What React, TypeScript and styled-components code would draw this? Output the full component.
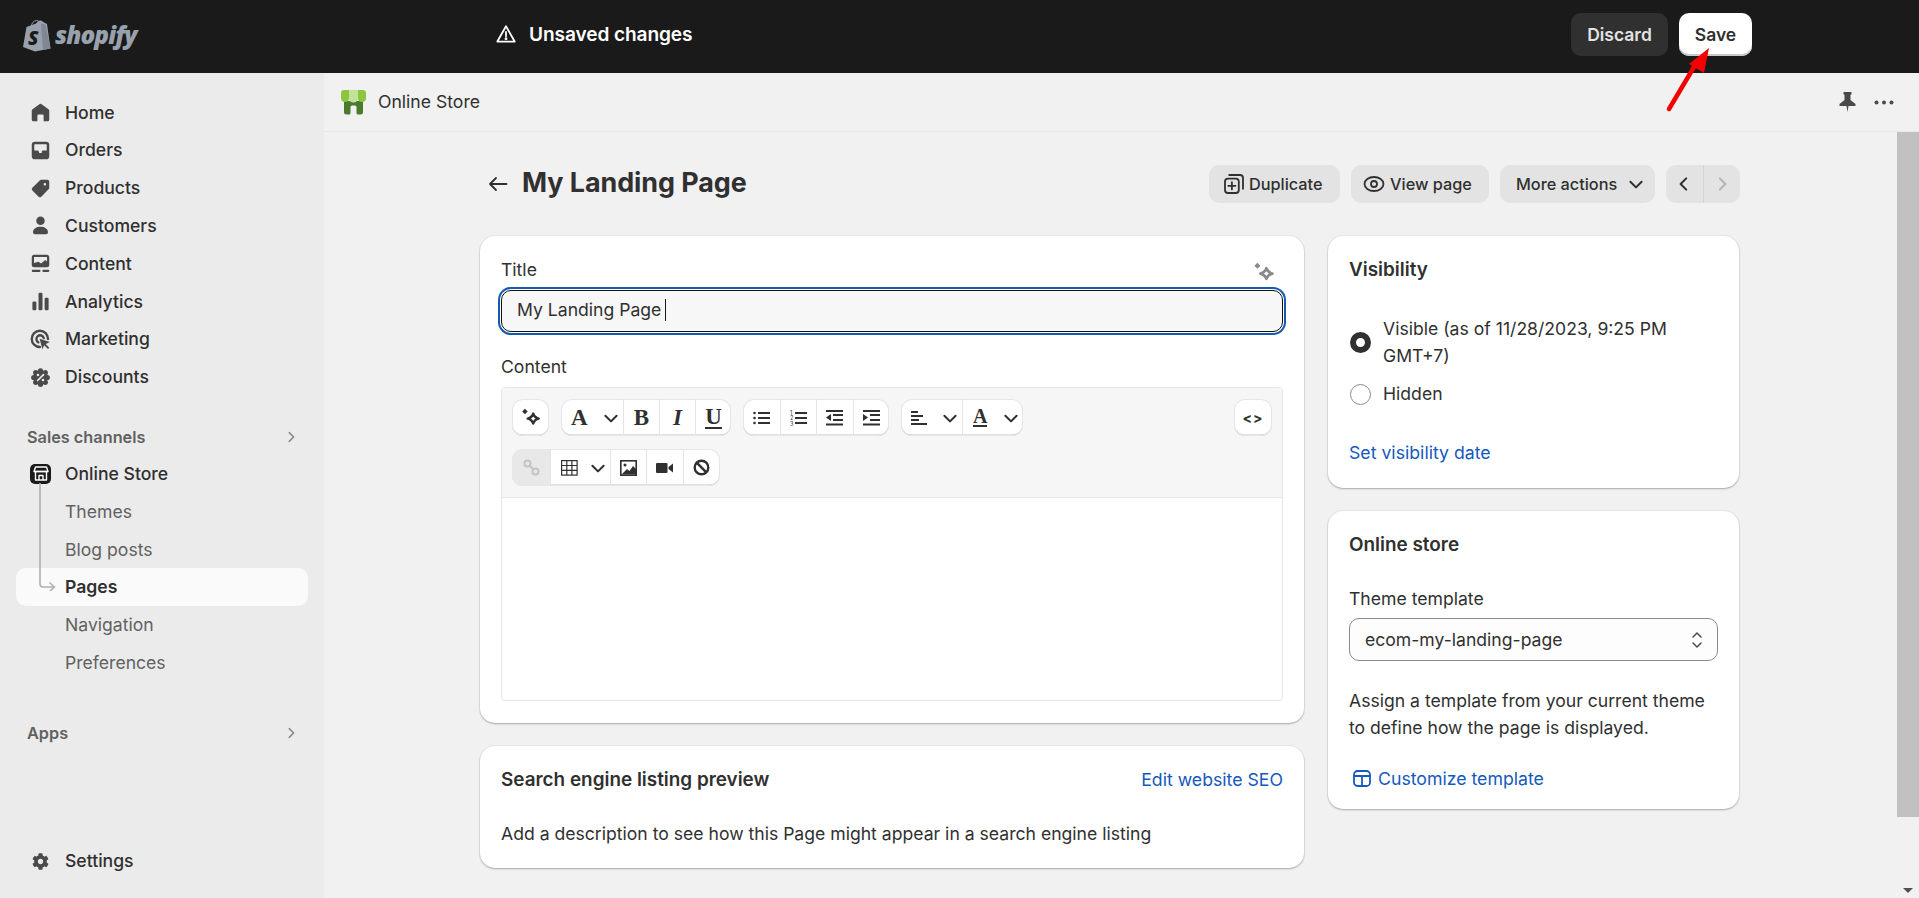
import React from "react";
import styled, { createGlobalStyle } from "styled-components";
import { FaCog } from "react-icons/fa";

const Global = createGlobalStyle`
  html, body { margin: 0; padding: 0; height: 100%; overflow: hidden; }
  body { font-family: Inter, "Noto Sans", sans-serif; font-size: 17.6px; font-weight: 400; color: #303030; background: #f1f1f1; }
  #root { height: 898px; }
  * { box-sizing: border-box; }
`;

const Shell = styled.div`position: relative; display: flex; flex-direction: column; width: 1919px; height: 898px; overflow: hidden;`;

const TopBar = styled.header`display: flex; align-items: center; flex: 0 0 73px; height: 73px; padding: 0 167px 4px 22px; background: #1a1a1a; color: #fff;`;
const LogoWrap = styled.div`display: flex; align-items: center; gap: 4px; width: 474px; margin-top: 2px;`;
const Wordmark = styled.span`font-family: "Open Sans", sans-serif; font-style: italic; font-weight: 800; font-size: 24.3px; letter-spacing: -0.9px; color: #98a1ac; line-height: 32px; margin-top: -1px;`;
const Status = styled.div`display: flex; align-items: center; gap: 13px; font-size: 19.1px; font-weight: 600; letter-spacing: -0.1px; margin-top: -1px;`;
const TopActions = styled.div`display: flex; gap: 11px; margin-left: auto;`;
const TopButton = styled.button<{ $primary?: boolean; $w: number }>`
  width: ${p => p.$w}px; height: 43px; border: 0; border-radius: 10px; font: inherit; font-size: 17.5px; font-weight: 600;
  color: ${p => (p.$primary ? "#303030" : "#e3e3e3")};
  background: ${p => (p.$primary ? "#fff" : "#303030")};
  box-shadow: ${p => (p.$primary ? "inset 0 -2px 0 #c9c9c9" : "none")};
`;

const Under = styled.div`display: flex; flex: 1; min-height: 0;`;
const Sidebar = styled.nav`position: relative; display: flex; flex-direction: column; flex: 0 0 324px; padding: 20.7px 0 18px; background: #ebebeb;`;
const NavItem = styled.div<{ $active?: boolean; $sub?: boolean; $top?: number }>`
  display: flex; align-items: center; gap: 12px; height: 37.8px; margin: ${p => p.$top ?? 0}px 16px 0; flex: none;
  padding-left: ${p => (p.$sub ? 49 : 12)}px; border-radius: 10px;
  color: ${p => (p.$sub && !p.$active ? "#616161" : "#303030")};
  font-weight: ${p => (p.$active ? 600 : p.$sub ? 400 : 500)};
  background: ${p => (p.$active ? "#fafafa" : "transparent")};
  line-height: 22px;
`;
const IconSlot = styled.span`display: flex; align-items: center; justify-content: center; width: 25px; height: 25px; color: #4a4a4a; flex: none;`;
const StoreBadge = styled.span`display: flex; align-items: center; justify-content: center; width: 21px; height: 20px; margin: 0 2px; border-radius: 5px; background: #1a1a1a; flex: none;`;
const SectionHead = styled.div<{ $top: number }>`
  display: flex; align-items: center; justify-content: space-between; height: 30px; margin: ${p => p.$top}px 26px 0 27px; flex: none;
  color: #616161; font-weight: 600; font-size: 16.3px; line-height: 22px;
`;
const SubTree = styled.div`position: relative; display: flex; flex-direction: column;`;
const Connector = styled.svg`position: absolute; left: 38px; top: 31px; width: 20px; height: 108px; pointer-events: none;`;
const SidebarFoot = styled.div`margin-top: auto;`;

const Main = styled.main`display: flex; flex-direction: column; flex: 1; min-width: 0; background: #f1f1f1;`;
const Crumbs = styled.div`display: flex; align-items: center; flex: 0 0 59px; padding: 0 25px 0 17px; gap: 12px; border-bottom: 1px solid #e8e8e8;`;
const CrumbTools = styled.div`display: flex; align-items: center; gap: 18px; margin-left: auto;`;
const Body = styled.div`display: flex; flex: 1; min-height: 0;`;
const Scroller = styled.div`flex: 1; min-width: 0; overflow: hidden; padding: 33px 0 0 156px;`;
const Rail = styled.div`display: flex; flex-direction: column; justify-content: space-between; flex: 0 0 22px; background: #f1f1f1;`;
const Thumb = styled.div`height: 685px; background: #c1c1c1;`;
const RailArrow = styled.div`align-self: center; margin-bottom: 5px; width: 0; height: 0; border-left: 5px solid transparent; border-right: 5px solid transparent; border-top: 5px solid #505050;`;

const Page = styled.div`width: 1260px;`;
const PageHead = styled.div`display: flex; align-items: center; height: 38px; padding-left: 8px; margin-bottom: 33px;`;
const PageTitle = styled.h1`margin: 0 0 0 14px; padding-bottom: 4px; font-size: 26.9px; font-weight: 700; color: #303030; letter-spacing: -0.05px; line-height: 34px;`;
const HeadActions = styled.div`display: flex; gap: 11px; margin-left: auto;`;
const GrayButton = styled.div<{ $w: number; $gap: number; $lead: number }>`
  display: flex; align-items: center; gap: ${p => p.$gap}px; width: ${p => p.$w}px; height: 38px; padding-left: ${p => p.$lead}px; border-radius: 10px;
  background: #e3e3e3; font-weight: 500; font-size: 16.3px; color: #303030;
`;
const Pager = styled.div`display: flex; width: 74px; height: 38px; border-radius: 10px; background: #e3e3e3; overflow: hidden;`;
const PagerSide = styled.div`
  display: flex; align-items: center; justify-content: center; flex: 1;
  & + & { border-left: 1px solid #d4d4d4; }
`;

const Columns = styled.div`display: grid; grid-template-columns: 824px 411px; gap: 24px; align-items: start;`;
const Column = styled.div<{ $gap: number }>`display: flex; flex-direction: column; gap: ${p => p.$gap}px;`;
const Card = styled.section<{ $pad: string }>`
  background: #fff; border-radius: 15px; padding: ${p => p.$pad};
  box-shadow: 0 1px 2px rgba(0,0,0,.28), 0 0 0 1px rgba(0,0,0,.035);
`;
const Row = styled.div`display: flex; align-items: center; justify-content: space-between;`;
const Line = styled.div<{ $top?: number }>`line-height: 25px; padding-bottom: 2px; margin-top: ${p => p.$top ?? 0}px;`;
const Stack = styled.div<{ $top?: number }>`display: flex; flex-direction: column; margin-top: ${p => p.$top ?? 0}px;`;
const CardTitle = styled.h2`margin: 0; line-height: 27px; font-size: 18.9px; font-weight: 600; color: #303030;`;
const Link = styled.div<{ $top?: number }>`display: flex; align-items: center; gap: 7px; font-size: 17.7px; line-height: 27px; margin-top: ${p => p.$top ?? 0}px; color: #1559bd;`;
const SparkleSlot = styled.span`display: flex; margin-right: 7px; padding-top: 4px; height: 27px; align-items: center;`;
const TitleInput = styled.div`
  display: flex; align-items: center; height: 42px; margin-top: 6px; padding: 0 0 3px 15px; border: 1px solid #111; border-radius: 10px; background: #f7f7f7;
  box-shadow: 0 0 0 1px #fff, 0 0 0 3px #1559b0;
`;
const Caret = styled.span`width: 1px; height: 22px; margin-left: 4px; background: #1a1a1a;`;
const Editor = styled.div`margin-top: 6.5px; height: 314px; border: 1px solid #e6e6e6; border-radius: 4px; overflow: hidden;`;
const Toolbar = styled.div`display: flex; flex-direction: column; gap: 13px; height: 110px; padding: 11px 10px 0; background: #f6f6f6; border-bottom: 1px solid #e6e6e6;`;
const ToolRow = styled.div`display: flex; gap: 12px;`;
const ToolGroup = styled.div<{ $end?: boolean }>`
  display: flex; height: 37px; border-radius: 11px; background: #fff; overflow: hidden; margin-left: ${p => (p.$end ? "auto" : 0)};
  box-shadow: inset 0 0 0 1px #e6e6e6, inset 0 -1.5px 0 #c4c4c4;
`;
const ToolBtn = styled.div<{ $w: number; $off?: boolean; $drop?: boolean }>`
  display: flex; align-items: center; justify-content: ${p => (p.$drop ? "space-between" : "center")};
  padding: ${p => (p.$drop ? "0 3px 0 10px" : "0")}; width: ${p => p.$w}px; height: 100%; color: #303030;
  background: ${p => (p.$off ? "#e8e8e8" : "transparent")};
  & + & { border-left: 1px solid #e3e3e3; }
`;
const Glyph = styled.span<{ $italic?: boolean; $under?: boolean; $small?: boolean }>`
  font-family: "Liberation Serif", serif; font-weight: 700; font-size: ${p => (p.$small ? 20 : 23)}px; line-height: ${p => (p.$small ? 17 : 20)}px; color: #303030;
  font-style: ${p => (p.$italic ? "italic" : "normal")};
  border-bottom: ${p => (p.$under ? "2.5px solid #303030" : "none")};
`;
const CodeGlyph = styled.span`font-weight: 700; font-size: 14px; letter-spacing: 1px; color: #303030;`;
const RadioRow = styled.div<{ $top: number }>`display: flex; align-items: center; gap: 12px; margin-top: ${p => p.$top}px; margin-left: 1px;`;
const Radio = styled.span<{ $on?: boolean }>`
  flex: none; width: 21px; height: 21px; border-radius: 50%; background: #fff;
  border: ${p => (p.$on ? "6px solid #303030" : "1px solid #8a8a8a")};
`;
const SelectBox = styled.div`display: flex; align-items: center; justify-content: space-between; height: 43px; margin-top: 5.5px; padding: 0 13px 0 15px; border: 1px solid #8a8a8a; border-radius: 10px; background: #fdfdfd;`;
const Arrow = styled.svg`position: absolute; left: 1660px; top: 44px; width: 56px; height: 72px; pointer-events: none;`;
const TemplateIcon = styled.svg`margin-left: 4px;`;

const P = { fill: "currentColor" } as const;
const Ic: React.FC<{ children: React.ReactNode }> = ({ children }) => (
  <IconSlot><svg width="25" height="25" viewBox="0 0 20 20" {...P}>{children}</svg></IconSlot>
);
const Chev: React.FC<{ d?: "r" | "d" | "l"; s?: number; c?: string; w?: number }> = ({ d = "d", s = 18, c = "#303030", w = 1.8 }) => {
  const pts = d === "d" ? "3,6 8,11 13,6" : d === "r" ? "6,3 11,8 6,13" : "10,3 5,8 10,13";
  return <svg width={s} height={s} viewBox="0 0 16 16"><polyline points={pts} fill="none" stroke={c} strokeWidth={w} strokeLinecap="round" strokeLinejoin="round" /></svg>;
};
const Sparkle: React.FC<{ c?: string; s?: number }> = ({ c = "#303030", s = 22 }) => (
  <svg width={s} height={s} viewBox="0 0 20 20" fill="none">
    <path d="M4.500 1.500 7 4 4.500 6.500 2 4Z" fill={c} />
    <path d="M12 6Q13 9.500 17 10.500Q13 11.500 12 15Q11 11.500 7 10.500Q11 9.500 12 6Z" stroke={c} strokeWidth="2.200" strokeLinejoin="round" />
  </svg>
);
const T: React.FC<{ children: React.ReactNode; w?: number; h?: number }> = ({ children, w = 17, h = 16 }) => (
  <svg width={w} height={h} viewBox="0 0 17 16" fill="#303030">{children}</svg>
);
const Bars: React.FC<{ rows: [number, number, number][] }> = ({ rows }) => (
  <>{rows.map(([x, y, wd], i) => <rect key={i} x={x} y={y} width={wd} height="2" />)}</>
);

const navTop = [
  ["Home", <path key="a" d="M10.6 3.2a1 1 0 0 0-1.2 0L3.6 7.4A1.5 1.5 0 0 0 3 8.6V15.500A1.5 1.5 0 0 0 4.5 17H7.5V12.500A1 1 0 0 1 8.5 11.500H11.500A1 1 0 0 1 12.500 12.500V17H15.500A1.500 1.500 0 0 0 17 15.500V8.6A1.500 1.500 0 0 0 16.4 7.4Z" />],
  ["Orders", <path key="a" fillRule="evenodd" d="M5.5 3A2.5 2.5 0 0 0 3 5.5v9A2.5 2.5 0 0 0 5.5 17h9a2.5 2.5 0 0 0 2.5-2.5v-9A2.5 2.5 0 0 0 14.5 3ZM5 5.5A.5.5 0 0 1 5.5 5h9a.5.5 0 0 1 .5.5V10h-3.2a.8.8 0 0 0-.7.45L11 12H9l-.6-1.55A.8.8 0 0 0 7.7 10H5Z" />],
  ["Products", <path key="a" fillRule="evenodd" d="M10.5 3H15.5A1.5 1.5 0 0 1 17 4.5V9.5A1.5 1.5 0 0 1 16.5 10.6L10.6 16.5A1.5 1.5 0 0 1 8.5 16.5L3.5 11.5A1.5 1.5 0 0 1 3.5 9.4L9.4 3.5A1.5 1.5 0 0 1 10.5 3ZM13.5 5.5a1 1 0 1 0 0 2 1 1 0 0 0 0-2Z" />],
  ["Customers", <g key="a"><circle cx="10" cy="6.2" r="3.4" /><path d="M4 15.3C4 12.6 6.8 11 10 11s6 1.6 6 4.3A1.6 1.6 0 0 1 14.4 17H5.6A1.6 1.6 0 0 1 4 15.3Z" /></g>],
  ["Content", <g key="a"><path fillRule="evenodd" d="M5 3A2 2 0 0 0 3 5v6a2 2 0 0 0 2 2h10a2 2 0 0 0 2-2V5a2 2 0 0 0-2-2ZM4.8 9.6V5.2c0-.2.1-.3.3-.3h9.8c.2 0 .3.1.3.3v3.2l-1.5-1.2-3.2 2.8-2.2-1.4Z" /><rect x="3" y="15" width="7" height="1.7" rx=".8" /><rect x="11.5" y="15" width="5.5" height="1.7" rx=".8" /></g>],
  ["Analytics", <g key="a"><rect x="3.5" y="10" width="3.2" height="7" rx="1" /><rect x="8.4" y="3" width="3.2" height="14" rx="1" /><rect x="13.3" y="7" width="3.2" height="10" rx="1" /></g>],
  ["Marketing", <g key="a"><path d="M9.5 16A6.5 6.5 0 1 1 16 9.5" fill="none" stroke="currentColor" strokeWidth="1.9" strokeLinecap="round" /><path d="M8.3 12.3A3 3 0 1 1 12.6 8.8" fill="none" stroke="currentColor" strokeWidth="1.9" strokeLinecap="round" /><path d="M9.3 9.3 17.5 12 14.2 13.6 17 16.6 16 17.5 13 14.6 11.5 17.8Z" /></g>],
  ["Discounts", <g key="a">{[0, 45, 90, 135, 180, 225, 270, 315].map(a => <circle key={a} cx={10 + 5.4 * Math.cos((a * Math.PI) / 180)} cy={10 + 5.4 * Math.sin((a * Math.PI) / 180)} r="2.1" />)}<circle cx="10" cy="10" r="5.6" /><g stroke="#ebebeb" strokeWidth="1.3" strokeLinecap="round"><line x1="12.4" y1="7.7" x2="7.7" y2="12.4" /></g><circle cx="8" cy="8" r="1" fill="#ebebeb" /><circle cx="12" cy="12" r="1" fill="#ebebeb" /></g>],
] as [string, React.ReactNode][];

export default function App() {
  return (
    <Shell>
      <Global />
      <TopBar>
        <LogoWrap>
          <svg width="29" height="33" viewBox="0 0 29 33">
            <path d="M1 28 4.5 8 14 4.5 Q16 1 19 1.5 L23 4 L25 5 L28.5 29.5 L13 32.5Z" fill="#98a1ac" />
            <path d="M19 4.5 23.5 5.5 28.5 29.5 21 31Z" fill="#7f8894" />
            <path d="M9 8Q10 2 14.5 1.5Q18 1.5 18.5 7" fill="none" stroke="#98a1ac" strokeWidth="1" />
            <text x="6" y="26" fontFamily="Open Sans" fontWeight="800" fontStyle="italic" fontSize="19" fill="#1a1a1a">S</text>
          </svg>
          <Wordmark>shopify</Wordmark>
        </LogoWrap>
        <Status>
          <svg width="20" height="20" viewBox="0 0 18 18" fill="none" stroke="#fff" strokeWidth="1.6" strokeLinejoin="round">
            <path d="M9 2 16.8 15.8H1.2Z" /><line x1="9" y1="7" x2="9" y2="11" strokeLinecap="round" /><circle cx="9" cy="13.3" r=".5" fill="#fff" />
          </svg>
          Unsaved changes
        </Status>
        <TopActions>
          <TopButton $w={97}>Discard</TopButton>
          <TopButton $w={73} $primary>Save</TopButton>
        </TopActions>
      </TopBar>
      <Under>
        <Sidebar>
          {navTop.map(([label, icon]) => (
            <NavItem key={label}><Ic>{icon}</Ic>{label}</NavItem>
          ))}
          <SectionHead $top={26}>Sales channels <Chev d="r" s={14} c="#8a8a8a" /></SectionHead>
          <SubTree>
            <NavItem $top={3}>
              <IconSlot>
                <StoreBadge>
                  <svg width="16" height="15" viewBox="0 0 16 15" fill="none" stroke="#fff" strokeWidth="1.4" strokeLinejoin="round">
                    <path d="M2.5 1h11L15 5.5H1Z" /><path d="M2.5 6v8h11V6" /><path d="M6 14V9.5h4V14" /><path d="M1 5.5h14" />
                  </svg>
                </StoreBadge>
              </IconSlot>
              Online Store
            </NavItem>
            <NavItem $sub>Themes</NavItem>
            <NavItem $sub>Blog posts</NavItem>
            <NavItem $sub $active>Pages</NavItem>
            <NavItem $sub>Navigation</NavItem>
            <NavItem $sub>Preferences</NavItem>
            <Connector viewBox="0 0 20 108" fill="none" stroke="#b0b0b0" strokeWidth="1.6" strokeLinecap="round" strokeLinejoin="round">
              <path d="M2 0V101Q2 104 5 104H16" /><path d="M12 100 16.5 104 12 108" />
            </Connector>
          </SubTree>
          <SectionHead $top={36}>Apps <Chev d="r" s={14} c="#8a8a8a" /></SectionHead>
          <SidebarFoot>
            <NavItem>
              <IconSlot><FaCog size={17} color="#4a4a4a" /></IconSlot>
              Settings
            </NavItem>
          </SidebarFoot>
        </Sidebar>
        <Main>
          <Crumbs>
            <svg width="25" height="25" viewBox="0 0 25 25">
              <path d="M3 11h19v11a2.5 2.5 0 0 1-2.5 2.5h-2.5a1.5 1.5 0 0 1-1.5-1.5V17a1.5 1.5 0 0 0-1.5-1.5h-3A1.5 1.5 0 0 0 9.500 17v6a1.500 1.500 0 0 1-1.500 1.500H5.500A2.500 2.500 0 0 1 3 22Z" fill="#4a7a2c" />
              <path d="M3 0h5v8a4 4 0 0 1-8 0V3a3 3 0 0 1 3-3Z" fill="#8cc63f" />
              <path d="M17 0h5a3 3 0 0 1 3 3v5a4 4 0 0 1-8 0Z" fill="#8cc63f" />
              <path d="M8 0h9v8a4.500 4.500 0 0 1-9 0Z" fill="#c2e29a" />
            </svg>
            <Line>Online Store</Line>
            <CrumbTools>
              <svg width="17" height="20" viewBox="0 0 16 20" fill="#4a4a4a"><path d="M4 0h8v2L11 3v5l5 4v2H9l-1 6-1-6H0v-2l5-4V3L4 2Z" /></svg>
              <svg width="20" height="5" viewBox="0 0 20 5" fill="#4a4a4a"><circle cx="2.500" cy="2.500" r="2" /><circle cx="10" cy="2.500" r="2" /><circle cx="17.500" cy="2.500" r="2" /></svg>
            </CrumbTools>
          </Crumbs>
          <Body>
            <Scroller>
              <Page>
                <PageHead>
                  <svg width="20" height="20" viewBox="0 0 20 20" fill="none" stroke="#303030" strokeWidth="1.8" strokeLinecap="round" strokeLinejoin="round"><path d="M18.500 10H2M8 4 2 10l6 6" /></svg>
                  <PageTitle>My Landing Page</PageTitle>
                  <HeadActions>
                    <GrayButton $w={131} $lead={13} $gap={3}>
                      <svg width="24" height="24" viewBox="0 0 20 20" fill="none" stroke="#303030" strokeWidth="1.500" strokeLinejoin="round"><rect x="2.500" y="5.500" width="11.500" height="12" rx="2.500" /><path d="M6 2.500h9A2.500 2.500 0 0 1 17.500 5v9" strokeLinecap="round" /><path d="M8.250 8.500v6M5.250 11.500h6" strokeLinecap="round" /></svg>
                      Duplicate
                    </GrayButton>
                    <GrayButton $w={138} $lead={12} $gap={5}>
                      <svg width="22" height="18" viewBox="0 0 22 18" fill="none" stroke="#303030" strokeWidth="1.800"><ellipse cx="11" cy="9" rx="9.500" ry="7" /><circle cx="11" cy="9" r="3" /></svg>
                      View page
                    </GrayButton>
                    <GrayButton $w={155} $lead={16} $gap={10}>More actions <Chev /></GrayButton>
                    <Pager>
                      <PagerSide><Chev d="l" /></PagerSide>
                      <PagerSide><Chev d="r" c="#b5b5b5" /></PagerSide>
                    </Pager>
                  </HeadActions>
                </PageHead>
                <Columns>
                  <Column $gap={23}>
                    <Card $pad="21px 21px 22px">
                      <Row><Line>Title</Line><SparkleSlot><Sparkle c="#8a8a8a" s={24} /></SparkleSlot></Row>
                      <TitleInput>My Landing Page<Caret /></TitleInput>
                      <Line $top={21.5}>Content</Line>
                      <Editor>
                        <Toolbar>
                          <ToolRow>
                            <ToolGroup><ToolBtn $w={37}><Sparkle /></ToolBtn></ToolGroup>
                            <ToolGroup>
                              <ToolBtn $w={62} $drop><Glyph>A</Glyph><Chev /></ToolBtn>
                              <ToolBtn $w={36}><Glyph>B</Glyph></ToolBtn>
                              <ToolBtn $w={36}><Glyph $italic>I</Glyph></ToolBtn>
                              <ToolBtn $w={36}><Glyph $under>U</Glyph></ToolBtn>
                            </ToolGroup>
                            <ToolGroup>
                              <ToolBtn $w={36.500}><T><circle cx="1.500" cy="3" r="1.300" /><circle cx="1.500" cy="8" r="1.300" /><circle cx="1.500" cy="13" r="1.300" /><Bars rows={[[5, 2, 12], [5, 7, 12], [5, 12, 12]]} /></T></ToolBtn>
                              <ToolBtn $w={36.500}><T><text x="0" y="5" fontSize="5.500" fontFamily="Inter">1</text><text x="0" y="10" fontSize="5.500" fontFamily="Inter">2</text><text x="0" y="15.500" fontSize="5.500" fontFamily="Inter">3</text><Bars rows={[[5, 2, 12], [5, 7, 12], [5, 12, 12]]} /></T></ToolBtn>
                              <ToolBtn $w={36.500}><T><Bars rows={[[0, 0, 17], [7, 4, 10], [7, 9, 10], [0, 13.500, 17]]} /><path d="M0 7.500 5 4V11Z" /></T></ToolBtn>
                              <ToolBtn $w={36.500}><T><Bars rows={[[0, 0, 17], [7, 4, 10], [7, 9, 10], [0, 13.500, 17]]} /><path d="M5 7.500 0 4V11Z" /></T></ToolBtn>
                            </ToolGroup>
                            <ToolGroup>
                              <ToolBtn $w={61} $drop><T><Bars rows={[[0, 1, 7], [0, 5, 12], [0, 9, 8], [0, 13, 16]]} /></T><Chev /></ToolBtn>
                              <ToolBtn $w={61} $drop><Glyph $under $small>A</Glyph><Chev /></ToolBtn>
                            </ToolGroup>
                            <ToolGroup $end><ToolBtn $w={38}><CodeGlyph>&lt;&gt;</CodeGlyph></ToolBtn></ToolGroup>
                          </ToolRow>
                          <ToolRow>
                            <ToolGroup>
                              <ToolBtn $w={38} $off><svg width="17" height="17" viewBox="0 0 17 17" fill="none" stroke="#c4c4c4" strokeWidth="2"><circle cx="4.500" cy="4.500" r="3" /><circle cx="12.500" cy="12.500" r="3" /><path d="M7 7l3 3" /></svg></ToolBtn>
                              <ToolBtn $w={60} $drop><T><g fill="none" stroke="#303030" strokeWidth="1.200"><rect x=".6" y=".6" width="15.500" height="14.500" /><path d="M.6 5.500h15.500M.6 10.300h15.500M5.800.6v14.500M10.900.6v14.500" /></g></T><Chev /></ToolBtn>
                              <ToolBtn $w={36}><T><rect x=".8" y=".8" width="15.400" height="14.400" fill="none" stroke="#303030" strokeWidth="1.600" /><circle cx="5" cy="5" r="1.500" /><path d="M1.500 14.500 7 9l2.500 2L13 6l3 3v5.500Z" /></T></ToolBtn>
                              <ToolBtn $w={36.500}><T><rect x="0" y="3" width="11.500" height="10" rx="1" /><path d="M12.500 7 17 3.500V12.500L12.500 9Z" /></T></ToolBtn>
                              <ToolBtn $w={37}><svg width="17" height="17" viewBox="0 0 17 17" fill="none" stroke="#303030" strokeWidth="2.400"><circle cx="8.500" cy="8.500" r="6.800" /><path d="M3.700 3.700l9.600 9.600" /></svg></ToolBtn>
                            </ToolGroup>
                          </ToolRow>
                        </Toolbar>
                      </Editor>
                    </Card>
                    <Card $pad="20px 21px 20px">
                      <Row><CardTitle>Search engine listing preview</CardTitle><Link>Edit website SEO</Link></Row>
                      <Line $top={27.5}>Add a description to see how this Page might appear in a search engine listing</Line>
                    </Card>
                  </Column>
                  <Column $gap={23}>
                    <Card $pad="20px 21px 22px">
                      <CardTitle>Visibility</CardTitle>
                      <RadioRow $top={32.500}><Radio $on /><Stack><Line>Visible (as of 11/28/2023, 9:25 PM</Line><Line>GMT+7)</Line></Stack></RadioRow>
                      <RadioRow $top={11}><Radio /><Line>Hidden</Line></RadioRow>
                      <Link $top={31.500}>Set visibility date</Link>
                    </Card>
                    <Card $pad="20px 21px 17.500px">
                      <CardTitle>Online store</CardTitle>
                      <Line $top={27.500}>Theme template</Line>
                      <SelectBox>
                        ecom-my-landing-page
                        <svg width="14" height="20" viewBox="0 0 14 20" fill="none" stroke="#4a4a4a" strokeWidth="1.500" strokeLinecap="round" strokeLinejoin="round"><path d="M3 7l4-4 4 4M3 13l4 4 4-4" /></svg>
                      </SelectBox>
                      <Stack $top={26.500}><Line>Assign a template from your current theme</Line><Line>to define how the page is displayed.</Line></Stack>
                      <Link $top={23}>
                        <TemplateIcon width="18" height="18" viewBox="0 0 18 18" fill="none" stroke="#1559bd" strokeWidth="1.800" strokeLinejoin="round"><rect x="1" y="2" width="16" height="15" rx="3.500" /><path d="M1 7h16M9 7v10" /></TemplateIcon>
                        Customize template
                      </Link>
                    </Card>
                  </Column>
                </Columns>
              </Page>
            </Scroller>
            <Rail><Thumb /><RailArrow /></Rail>
          </Body>
        </Main>
      </Under>
      <Arrow viewBox="0 0 56 72" fill="#f40000">
        <path d="M9 65 L37 18" stroke="#f40000" strokeWidth="4.500" strokeLinecap="round" />
        <path d="M49 4 L44 29 L29 20Z" />
      </Arrow>
    </Shell>
  );
}
